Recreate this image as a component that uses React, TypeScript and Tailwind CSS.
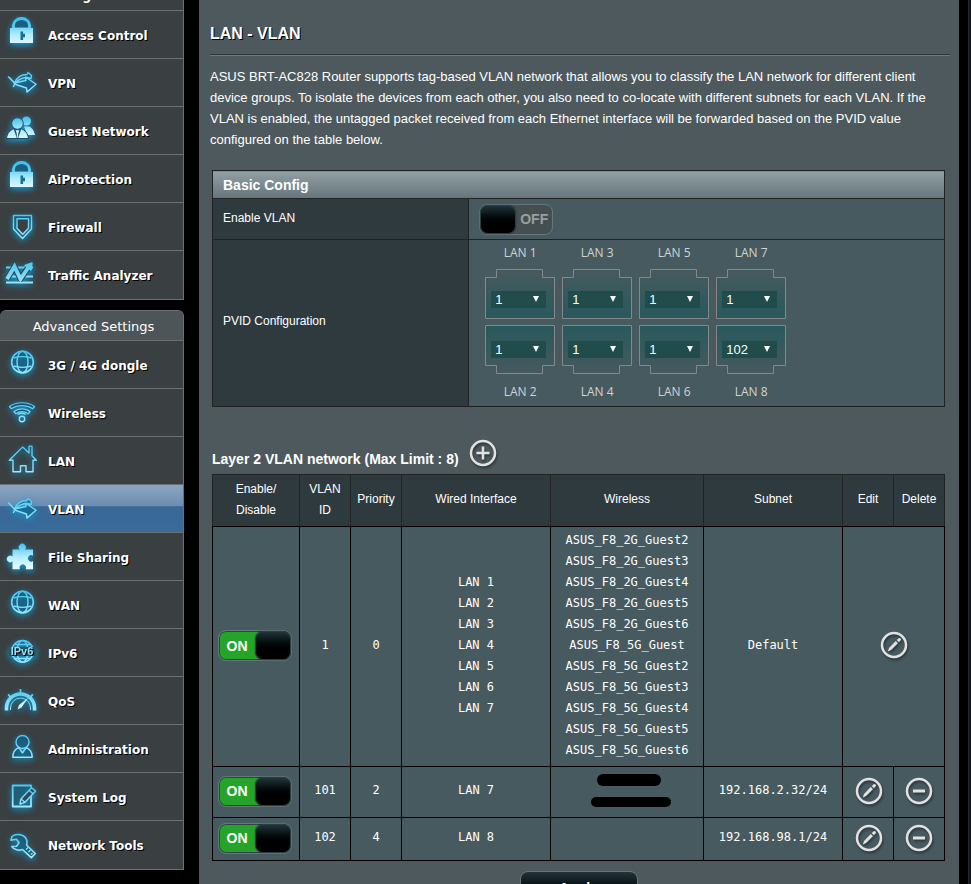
import type { ReactNode } from "react";

const CYAN = "url(#cyan)";

function Defs() {
  return (
    <svg className="absolute h-0 w-0" aria-hidden="true">
      <defs>
        <linearGradient id="cyan" gradientUnits="userSpaceOnUse" x1="0" y1="9" x2="0" y2="36">
          <stop offset="0" stopColor="#3fc4f2" />
          <stop offset="1" stopColor="#a8ecff" />
        </linearGradient>
        <linearGradient id="solid" gradientUnits="userSpaceOnUse" x1="0" y1="9" x2="0" y2="34">
          <stop offset="0" stopColor="#37bdf0" />
          <stop offset="0.6" stopColor="#b4ecff" />
          <stop offset="1" stopColor="#e4f9ff" />
        </linearGradient>
        <linearGradient id="portTop" x1="0" y1="0" x2="0" y2="1">
          <stop offset="0" stopColor="#47595e" />
          <stop offset="1" stopColor="#28595d" />
        </linearGradient>
        <linearGradient id="portBottom" x1="0" y1="0" x2="0" y2="1">
          <stop offset="0" stopColor="#28595d" />
          <stop offset="1" stopColor="#47595e" />
        </linearGradient>
      </defs>
    </svg>
  );
}

function Glyph({ children }: { children: ReactNode }) {
  return (
    <svg
      viewBox="0 0 44 47"
      className="h-[47px] w-11 shrink-0 drop-shadow-[0_2px_3px_#0f9fd8]"
      fill="none"
      stroke={CYAN}
      strokeWidth="1.4"
      strokeLinejoin="round"
      aria-hidden="true"
    >
      {children}
    </svg>
  );
}

const Lock = () => (
  <Glyph>
    <path d="M13.5 18v-3.5a8 7 0 0 1 16 0V18z" fill="#1d5d80" strokeWidth="2.8" />
    <rect x="10" y="17" width="23" height="15" fill="url(#solid)" stroke="none" />
    <path d="M20.5 20.5h2.6v2.2H25v3.6h-1.9V29h-2.6z" fill="#14719c" stroke="none" />
  </Glyph>
);

const Arrows = () => (
  <Glyph>
    <path d="M8 17.500L14.500 24C17 18 21 15.500 27 15.500L28 13.500 31.500 16.500 31 19.500 27.500 18.500C22 18.500 19 20 16.500 23" fill="#14506d" fillOpacity="0.5" />
    <path d="M14.500 24L26 21.500 25.500 18 36 25.300 27 33 26.500 29 14.500 25z" fill="#14506d" fillOpacity="0.5" />
    <path d="M9 18l6 6.500-1.800 3.500" />
  </Glyph>
);

const Guests = () => (
  <Glyph>
    <g fill="url(#solid)" stroke="none">
      <circle cx="26.500" cy="14" r="4.500" />
      <path d="M24 19.500h5.500c3 1.500 4.500 4.500 5.500 8.500h-7.500z" />
    </g>
    <g fill="url(#solid)" stroke="#24485a" strokeWidth="1">
      <circle cx="17.500" cy="16.500" r="5.800" />
      <path d="M6.500 31.500c.5-5 3.500-8.500 7.500-9.800l3.500 1.300 3.500-1.300c4 1.300 7 4.800 7.500 9.800z" />
    </g>
    <path d="M14.500 22l3 9 3-9" stroke="#24485a" />
    <path d="M17.500 23.500v7" stroke="#c9f2ff" />
  </Glyph>
);

const Shield = () => (
  <Glyph>
    <path d="M13.500 12.500h18v13.500l-9 9.500-9-9.500z" fill="#14506d" fillOpacity="0.5" />
    <path d="M17 15.800h11.500v9.500L22.700 31.300 17 25.300z" fill="#3a3f41" />
  </Glyph>
);

const Traffic = () => (
  <Glyph>
    <path d="M6 16.500h27M6 25.500h27M6 31.500h27" strokeWidth="1.800" />
    <path d="M7 28l7.500-12.500L20.500 28 29 15.500" stroke="#3a3f41" strokeWidth="6" />
    <path d="M7 28l7.500-12.500L20.500 28 29 15.500" strokeWidth="4" strokeLinejoin="miter" />
    <path d="M25 14.500l7-2.500-1 7z" fill={CYAN} />
  </Glyph>
);

const Globe = () => (
  <Glyph>
    <circle cx="22.500" cy="21" r="10.800" fill="#14506d" fillOpacity="0.5" strokeWidth="1.600" />
    <ellipse cx="22.500" cy="21" rx="5.500" ry="10.800" />
    <path d="M13.500 17c5-1.500 13-1.500 18 0M13.500 25c5 1.500 13 1.500 18 0" />
  </Glyph>
);

const Wifi = () => (
  <Glyph>
    <path d="M9.500 17.500c7-5 18-5 25 0l-1.800 2.200c-6-4.200-15.400-4.200-21.400 0zM14 22.500c4.500-3.500 11.500-3.500 16 0l-1.800 2.200c-3.500-2.700-9-2.700-12.400 0z" fill="#14506d" strokeWidth="1.200" />
    <path d="M17.800 25.500c2.500-1.500 5.500-1.500 8 0" />
    <circle cx="22" cy="30" r="2.700" />
  </Glyph>
);

const House = () => (
  <Glyph>
    <path d="M9.300 23.200L22.700 10l6.300 6V9.300h3v9.500l4.300 4.400h-3.300v11.500h-7v-6h-5.500v6h-7.500V23.200z" />
  </Glyph>
);

const Puzzle = () => (
  <Glyph>
    <path
      fill="url(#solid)"
      stroke="none"
      d="M12.500 16.500h7.200a3.500 3.500 0 1 1 5.200 0H33v6.200a3.200 3.200 0 1 0 0 5.300v8.300h-7.500a3.200 3.200 0 1 0-5.400 0h-7.600v-8a3.300 3.300 0 1 1 0-4.800z"
    />
  </Glyph>
);

const Ipv6 = () => (
  <Glyph>
    <circle cx="22.500" cy="22.300" r="10.800" />
    <ellipse cx="22.500" cy="22.300" rx="5.500" ry="10.800" />
    <path d="M15 15.500h15M15 29.500h15" />
    <rect x="9" y="18" width="27" height="9" fill="#2f5262" stroke="none" />
    <text
      x="22"
      y="26"
      textAnchor="middle"
      fill="#8fe2fb"
      stroke="none"
      className="font-['Liberation_Sans',sans-serif] text-[11px] font-bold"
    >
      IPv6
    </text>
  </Glyph>
);

const Gauge = () => (
  <Glyph>
    <path d="M6.500 33.500v-2.500a14 14 0 0 1 28 0v2.500" strokeWidth="3.600" />
    <path d="M20.500 16v-4M10.500 20l-2.300-2.600M30.500 20l2.300-2.600" strokeWidth="1.800" />
    <path d="M10.500 33v-2a10 10 0 0 1 20 0v2" strokeWidth="1" />
    <path d="M28.500 20.500L21.500 30.500l-4 2 1.500-4.500z" fill="#c6f3ff" stroke="none" />
  </Glyph>
);

const Person = () => (
  <Glyph>
    <circle cx="22.500" cy="17" r="6.500" fill="#14506d" fillOpacity="0.5" />
    <path d="M12.800 32.300c0-5 2-8 6-9.800l3.700 5.500 3.700-5.500c4 1.800 6 4.800 6 9.800z" fill="#14506d" fillOpacity="0.5" />
  </Glyph>
);

const Log = () => (
  <Glyph>
    <path d="M31 22v11.500H12.700V12.500H31v2" strokeWidth="1.800" fill="#14506d" fillOpacity="0.300" />
    <path d="M20 31l1-5 10.500-11.300 4 3.300L25 29.300z" fill="#2c4a58" />
    <path d="M21 26l4 3.300M29 17.300l4 3.400" />
  </Glyph>
);

const Wrench = () => (
  <Glyph>
    <path
      d="M12 15.500c4-3.500 12-2.500 14.500 3 .8 2 .6 3.800 0 5.500l8.800 8.500-4 4.200-8.800-8.200c-3.500 1.300-8.500.5-10.800-3l5-.2 2.300-3.500-2.500-3.500-5.500.8z"
      fill="#14506d"
      fillOpacity="0.400"
      strokeWidth="1.600"
    />
    <path d="M26 28.500l2-2M28.500 31l2-2M31 33.500l1.500-1.500" />
  </Glyph>
);

type Item = { label: string; icon: () => ReactNode; active?: boolean };

const general: Item[] = [
  { label: "Access Control", icon: Lock },
  { label: "VPN", icon: Arrows },
  { label: "Guest Network", icon: Guests },
  { label: "AiProtection", icon: Lock },
  { label: "Firewall", icon: Shield },
  { label: "Traffic Analyzer", icon: Traffic },
];

const advanced: Item[] = [
  { label: "3G / 4G dongle", icon: Globe },
  { label: "Wireless", icon: Wifi },
  { label: "LAN", icon: House },
  { label: "VLAN", icon: Arrows, active: true },
  { label: "File Sharing", icon: Puzzle },
  { label: "WAN", icon: Globe },
  { label: "IPv6", icon: Ipv6 },
  { label: "QoS", icon: Gauge },
  { label: "Administration", icon: Person },
  { label: "System Log", icon: Log },
  { label: "Network Tools", icon: Wrench },
];

function Menu({ items }: { items: Item[] }) {
  return (
    <ul>
      {items.map(({ label, icon: Icon, active }) => (
        <li key={label} className="border-b border-[#6b7071] last:pb-px">
          <a
            href="#"
            className={
              "flex h-[47px] items-center gap-1 text-xs font-bold text-white [text-shadow:1px_1px_0_#000] " +
              (active
                ? "bg-[linear-gradient(180deg,#8ca6c2_0%,#6b8db0_45%,#386896_46%,#386b9b_100%)]"
                : "")
            }
          >
            <Icon />
            <span className="pt-0.5">{label}</span>
          </a>
        </li>
      ))}
    </ul>
  );
}

function Toggle({ on, label }: { on: boolean; label: string }) {
  return (
    <button
      type="button"
      role="switch"
      aria-checked={on}
      aria-label={label}
      className={
        "flex h-[31px] w-[74px] items-center rounded-lg border border-[#66777b] text-center font-['Liberation_Sans',Arial,sans-serif] text-sm font-bold " +
        (on ? "bg-[#24a52a] text-white shadow-[inset_0_0_0_1px_#2f4448]" : "flex-row-reverse bg-[#454f51] text-[#999fa0]")
      }
    >
      <span className="flex-1">{on ? "ON" : "OFF"}</span>
      <span className="h-[29px] w-9 rounded-lg border border-[#2b3e42] bg-linear-to-b from-[#21343a] to-black to-75% shadow-[0_0_1px_#000]" />
    </button>
  );
}

function Round({ label, children }: { label: string; children: ReactNode }) {
  return (
    <button type="button" aria-label={label} className="block size-7">
      <svg
        viewBox="0 0 28 28"
        className="size-7 drop-shadow-[1px_2px_1px_#0006]"
        fill="none"
        stroke="#e2e2e2"
        strokeWidth="2.500"
        aria-hidden="true"
      >
        <circle cx="14" cy="14" r="12" />
        {children}
      </svg>
    </button>
  );
}

const Add = () => (
  <Round label="Add VLAN">
    <path d="M14 7.500v13M7.500 14h13" />
  </Round>
);
const Edit = () => (
  <Round label="Edit">
    <path d="M7.800 20.500l1.200-3.600 6.800-6.800 2.100 2.100-6.800 6.900z" fill="#e2e2e2" stroke="none" />
    <path d="M16.800 9.100l1.600-1.600a1.300 1.300 0 0 1 2.100 2.100l-1.600 1.600z" fill="#e2e2e2" stroke="none" />
  </Round>
);
const Remove = () => (
  <Round label="Delete">
    <path d="M8 14h12" strokeWidth="3" />
  </Round>
);

function PortSelect({ port, value, flipped }: { port: number; value: string; flipped?: boolean }) {
  return (
    <div className="relative h-[50px] w-[70px]">
      <svg viewBox="0 0 70 50" className="h-[50px] w-[70px]" stroke="#858789" aria-hidden="true">
        {flipped ? (
          <path fill="url(#portBottom)" d="M.5.500h69v40h-12v8h-46v-8H.5z" />
        ) : (
          <path fill="url(#portTop)" d="M.5 49.500h69v-41h-12v-8h-46v8H.5z" />
        )}
      </svg>
      <select
        id={"lan" + port}
        defaultValue={value}
        className={
          "absolute left-1.5 h-[17px] w-[55px] appearance-none bg-[#204c4c] pl-1 font-['Liberation_Sans',Arial,sans-serif] text-[13px] leading-[17px] text-white " +
          (flipped ? "top-4" : "top-[22px]")
        }
      >
        <option>1</option>
        <option>101</option>
        <option>102</option>
      </select>
      <span
        className={
          "pointer-events-none absolute left-12 border-x-[3px] border-t-[6px] border-x-transparent border-t-white " +
          (flipped ? "top-[21px]" : "top-[27px]")
        }
      />
    </div>
  );
}

const ports = [
  ["1", "1"],
  ["1", "1"],
  ["1", "1"],
  ["1", "102"],
];

const portLabel =
  "block text-center font-['Open_Sans',sans-serif] text-xs leading-5 text-[#d0d4d5]";

const ssids = [
  "ASUS_F8_2G_Guest2",
  "ASUS_F8_2G_Guest3",
  "ASUS_F8_2G_Guest4",
  "ASUS_F8_2G_Guest5",
  "ASUS_F8_2G_Guest6",
  "ASUS_F8_5G_Guest",
  "ASUS_F8_5G_Guest2",
  "ASUS_F8_5G_Guest3",
  "ASUS_F8_5G_Guest4",
  "ASUS_F8_5G_Guest5",
  "ASUS_F8_5G_Guest6",
];

const heading = "font-['Liberation_Sans',Arial,sans-serif] text-sm font-black";

export default function App() {
  return (
    <div className="flex h-screen overflow-hidden bg-black font-['Liberation_Sans',Arial,sans-serif] text-xs text-white">
      <Defs />
      <nav className="mr-[15px] w-[184px] shrink-0 font-['DejaVu_Sans',Verdana,sans-serif]">
        <div className="border-r border-[#6b7071] bg-[#3a3f41]">
          <div className="flex h-[11px] items-end overflow-hidden border-b border-[#6b7071] pb-1.5 pl-12 text-xs leading-4 font-bold">
            Config
          </div>
          <Menu items={general} />
        </div>
        <div className="mt-2.5 overflow-hidden rounded-t-md border-t border-r border-[#6b7071] bg-[#3a3f41]">
          <h2 className="h-[30px] border-b border-[#6b7071] bg-[#4d5558] pt-px pl-1 text-center text-[13px] leading-[30px]">
            Advanced Settings
          </h2>
          <Menu items={advanced} />
        </div>
      </nav>

      <main className="min-w-0 flex-1 bg-[#4d595d] pt-[22px]">
        <div className="pr-[9px] pl-[11px]">
          <h1 className="text-base leading-6 font-bold [text-shadow:1px_1px_0_#000]">LAN - VLAN</h1>
          <hr className="mt-2 h-0.5 border-t border-b border-t-[#2c3538] border-b-[#6c797d]" />
          <p className="mt-2.5 pr-4 text-[13px] leading-[21px]">
            ASUS BRT-AC828 Router supports tag-based VLAN network that allows you to classify the LAN network for
            different client device groups. To isolate the devices from each other, you also need to co-locate with
            different subnets for each VLAN. If the VLAN is enabled, the untagged packet received from each Ethernet
            interface will be forwarded based on the PVID value configured on the table below.
          </p>
        </div>

        <div className="pr-3.5 pl-[13px]">
          <table className="mt-5 w-full table-fixed border-collapse border border-[#222]">
            <colgroup>
              <col className="w-[35%]" />
              <col />
            </colgroup>
            <thead>
              <tr className="h-7">
                <th
                  colSpan={2}
                  className={"border border-[#222] bg-linear-to-b from-[#92a0a5] to-[#66757c] pl-2.5 text-left " + heading}
                >
                  Basic Config
                </th>
              </tr>
            </thead>
            <tbody>
              <tr className="h-[41px]">
                <th className="border border-[#222] bg-[#2f3a3e] pb-0.5 pl-2.5 text-left font-normal">Enable VLAN</th>
                <td className="border border-[#222] bg-[#475a5f] pl-2.5">
                  <Toggle on={false} label="Enable VLAN" />
                </td>
              </tr>
              <tr className="h-[167px]">
                <th className="border border-[#222] bg-[#2f3a3e] pb-1 pl-2.5 text-left font-normal">
                  PVID Configuration
                </th>
                <td className="border border-[#222] bg-[#475a5f] pt-[3px] pb-0.5 pl-4 align-top">
                  <div className="flex gap-[7px]">
                    {ports.map(([a, b], i) => (
                      <div key={i}>
                        <label htmlFor={"lan" + (i * 2 + 1)} className={portLabel}>
                          LAN {i * 2 + 1}
                        </label>
                        <div className="mt-1.5 mb-[7px] flex flex-col gap-1.5">
                          <PortSelect port={i * 2 + 1} value={a} />
                          <PortSelect port={i * 2 + 2} value={b} flipped />
                        </div>
                        <label htmlFor={"lan" + (i * 2 + 2)} className={portLabel}>
                          LAN {i * 2 + 2}
                        </label>
                      </div>
                    ))}
                  </div>
                </td>
              </tr>
            </tbody>
          </table>

          <div className="mt-8 flex items-end gap-2.5 pb-[7px]">
            <h2 className={"leading-4 " + heading}>Layer 2 VLAN network (Max Limit : 8)</h2>
            <Add />
          </div>

          <table className="w-full table-fixed border-collapse border border-black text-center">
            <colgroup>
              <col className="w-[87px]" />
              <col className="w-[51px]" />
              <col className="w-[51px]" />
              <col />
              <col className="w-[153px]" />
              <col className="w-[139px]" />
              <col className="w-[51px]" />
              <col className="w-[51px]" />
            </colgroup>
            <thead>
              <tr className="h-[52px] bg-[#2f3a3e] leading-[21px] *:border *:border-[#222] *:border-b-black *:p-0 *:pb-0.5 *:font-normal">
                <th>
                  Enable/
                  <br />
                  Disable
                </th>
                <th>
                  VLAN
                  <br />
                  ID
                </th>
                <th>Priority</th>
                <th>Wired Interface</th>
                <th>Wireless</th>
                <th>Subnet</th>
                <th>Edit</th>
                <th>Delete</th>
              </tr>
            </thead>
            <tbody className="bg-[#475a5f] font-['DejaVu_Sans_Mono',monospace] leading-[21px] [&_td]:border [&_td]:border-black [&_td]:p-0">
              <tr className="h-60">
                <td>
                  <div className="pb-0.5 pl-[5px]">
                    <Toggle on label="VLAN 1" />
                  </div>
                </td>
                <td>
                  <div className="pb-0.5">1</div>
                </td>
                <td>
                  <div className="pb-0.5">0</div>
                </td>
                <td>
                  <div className="pb-0.5">
                    {[1, 2, 3, 4, 5, 6, 7].map((n) => (
                      <div key={n}>LAN {n}</div>
                    ))}
                  </div>
                </td>
                <td>
                  <div className="pb-0.5">
                    {ssids.map((s) => (
                      <div key={s}>{s}</div>
                    ))}
                  </div>
                </td>
                <td>
                  <div className="pb-0.5">Default</div>
                </td>
                <td colSpan={2}>
                  <div className="flex justify-center pb-1 pl-px">
                    <Edit />
                  </div>
                </td>
              </tr>
              <tr className="h-[51px]">
                <td>
                  <div className="pb-0.5 pl-[5px]">
                    <Toggle on label="VLAN 101" />
                  </div>
                </td>
                <td>
                  <div className="pb-1">101</div>
                </td>
                <td>
                  <div className="pb-1">2</div>
                </td>
                <td>
                  <div className="pb-1">LAN 7</div>
                </td>
                <td>
                  <div className="flex flex-col items-center gap-[11px] pb-1 pl-1">
                    <div className="h-3 w-16 rounded-full bg-black" />
                    <div className="ml-1 h-2.5 w-20 rounded-full bg-black" />
                  </div>
                </td>
                <td>
                  <div className="pb-1">192.168.2.32/24</div>
                </td>
                <td>
                  <div className="flex justify-center pb-0.5 pl-px">
                    <Edit />
                  </div>
                </td>
                <td>
                  <div className="flex justify-center pb-0.5">
                    <Remove />
                  </div>
                </td>
              </tr>
              <tr className="h-[43px]">
                <td>
                  <div className="pb-0.5 pl-[5px]">
                    <Toggle on label="VLAN 102" />
                  </div>
                </td>
                <td>
                  <div className="pb-1">102</div>
                </td>
                <td>
                  <div className="pb-1">4</div>
                </td>
                <td>
                  <div className="pb-1">LAN 8</div>
                </td>
                <td />
                <td>
                  <div className="pb-1">192.168.98.1/24</div>
                </td>
                <td>
                  <div className="flex justify-center pb-0.5 pl-px">
                    <Edit />
                  </div>
                </td>
                <td>
                  <div className="flex justify-center pb-0.5">
                    <Remove />
                  </div>
                </td>
              </tr>
            </tbody>
          </table>

          <div className="mt-2.5 flex justify-center">
            <button
              type="button"
              className="h-[33px] w-[118px] rounded-lg border border-[#66777b] bg-linear-to-b from-[#21343a] to-black text-sm font-bold"
            >
              Apply
            </button>
          </div>
        </div>
      </main>
      <div className="ml-[9px] w-[3px] shrink-0 border-l border-[#24282b] bg-[#0a1a28]" />
    </div>
  );
}
